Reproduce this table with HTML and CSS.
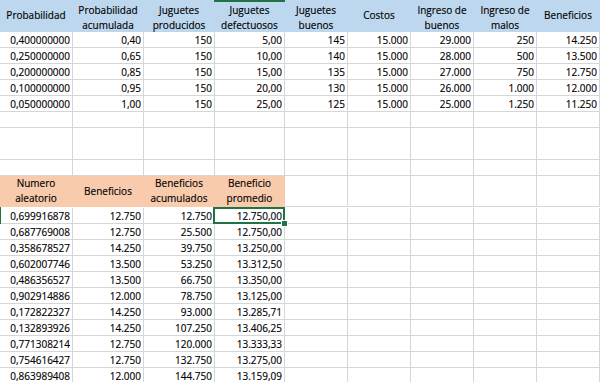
FILE: index.html
```html
<!DOCTYPE html>
<html lang="es">
<head>
<meta charset="utf-8">
<title>Simulación</title>
<link rel="stylesheet" href="styles.css">
</head>
<body>
<div class="sheet">
  <!-- header row -->
  <div class="c hb one">Probabilidad</div>
  <div class="c hb two">Probabilidad<br>acumulada</div>
  <div class="c hb two">Juguetes<br>producidos</div>
  <div class="c hb two colsel">Juguetes<br>defectuosos</div>
  <div class="c hb two">Juguetes<br>buenos</div>
  <div class="c hb one">Costos</div>
  <div class="c hb two">Ingreso de<br>buenos</div>
  <div class="c hb two">Ingreso de<br>malos</div>
  <div class="c hb one">Beneficios</div>

  <div class="c n">0,400000000</div><div class="c n">0,40</div><div class="c n">150</div><div class="c n">5,00</div><div class="c n">145</div><div class="c n">15.000</div><div class="c n">29.000</div><div class="c n">250</div><div class="c n">14.250</div>
  <div class="c n">0,250000000</div><div class="c n">0,65</div><div class="c n">150</div><div class="c n">10,00</div><div class="c n">140</div><div class="c n">15.000</div><div class="c n">28.000</div><div class="c n">500</div><div class="c n">13.500</div>
  <div class="c n">0,200000000</div><div class="c n">0,85</div><div class="c n">150</div><div class="c n">15,00</div><div class="c n">135</div><div class="c n">15.000</div><div class="c n">27.000</div><div class="c n">750</div><div class="c n">12.750</div>
  <div class="c n">0,100000000</div><div class="c n">0,95</div><div class="c n">150</div><div class="c n">20,00</div><div class="c n">130</div><div class="c n">15.000</div><div class="c n">26.000</div><div class="c n">1.000</div><div class="c n">12.000</div>
  <div class="c n">0,050000000</div><div class="c n">1,00</div><div class="c n">150</div><div class="c n">25,00</div><div class="c n">125</div><div class="c n">15.000</div><div class="c n">25.000</div><div class="c n">1.250</div><div class="c n">11.250</div>

  <div class="c"></div><div class="c"></div><div class="c"></div><div class="c"></div><div class="c"></div><div class="c"></div><div class="c"></div><div class="c"></div><div class="c"></div>
  <div class="c tall"></div><div class="c tall"></div><div class="c tall"></div><div class="c tall"></div><div class="c tall"></div><div class="c tall"></div><div class="c tall"></div><div class="c tall"></div><div class="c tall"></div>
  <div class="c"></div><div class="c"></div><div class="c"></div><div class="c"></div><div class="c"></div><div class="c"></div><div class="c"></div><div class="c"></div><div class="c"></div>

  <!-- second table header -->
  <div class="c ho two2">Numero<br>aleatorio</div>
  <div class="c ho one2">Beneficios</div>
  <div class="c ho two2">Beneficios<br>acumulados</div>
  <div class="c ho two2">Beneficio<br>promedio</div>
  <div class="c h2"></div><div class="c h2"></div><div class="c h2"></div><div class="c h2"></div><div class="c h2"></div>

  <div class="c n rowsel">0,699916878</div><div class="c n">12.750</div><div class="c n">12.750</div><div class="c n sel">12.750,00</div><div class="c"></div><div class="c"></div><div class="c"></div><div class="c"></div><div class="c"></div>
  <div class="c n">0,687769008</div><div class="c n">12.750</div><div class="c n">25.500</div><div class="c n">12.750,00</div><div class="c"></div><div class="c"></div><div class="c"></div><div class="c"></div><div class="c"></div>
  <div class="c n">0,358678527</div><div class="c n">14.250</div><div class="c n">39.750</div><div class="c n">13.250,00</div><div class="c"></div><div class="c"></div><div class="c"></div><div class="c"></div><div class="c"></div>
  <div class="c n">0,602007746</div><div class="c n">13.500</div><div class="c n">53.250</div><div class="c n">13.312,50</div><div class="c"></div><div class="c"></div><div class="c"></div><div class="c"></div><div class="c"></div>
  <div class="c n">0,486356527</div><div class="c n">13.500</div><div class="c n">66.750</div><div class="c n">13.350,00</div><div class="c"></div><div class="c"></div><div class="c"></div><div class="c"></div><div class="c"></div>
  <div class="c n">0,902914886</div><div class="c n">12.000</div><div class="c n">78.750</div><div class="c n">13.125,00</div><div class="c"></div><div class="c"></div><div class="c"></div><div class="c"></div><div class="c"></div>
  <div class="c n">0,172822327</div><div class="c n">14.250</div><div class="c n">93.000</div><div class="c n">13.285,71</div><div class="c"></div><div class="c"></div><div class="c"></div><div class="c"></div><div class="c"></div>
  <div class="c n">0,132893926</div><div class="c n">14.250</div><div class="c n">107.250</div><div class="c n">13.406,25</div><div class="c"></div><div class="c"></div><div class="c"></div><div class="c"></div><div class="c"></div>
  <div class="c n">0,771308214</div><div class="c n">12.750</div><div class="c n">120.000</div><div class="c n">13.333,33</div><div class="c"></div><div class="c"></div><div class="c"></div><div class="c"></div><div class="c"></div>
  <div class="c n">0,754616427</div><div class="c n">12.750</div><div class="c n">132.750</div><div class="c n">13.275,00</div><div class="c"></div><div class="c"></div><div class="c"></div><div class="c"></div><div class="c"></div>
  <div class="c n">0,863989408</div><div class="c n">12.000</div><div class="c n">144.750</div><div class="c n">13.159,09</div><div class="c"></div><div class="c"></div><div class="c"></div><div class="c"></div><div class="c"></div>
</div>
</body>
</html>
```

FILE: styles.css
```css
html, body {
  margin: 0;
  padding: 0;
  background: #ffffff;
  overflow: hidden;
}

.sheet {
  display: grid;
  grid-template-columns: 73px 71px 71px 70px 63px 63px 63px 63px 63px;
  grid-auto-rows: 16px;
  width: 600px;
  font-family: "Open Sans", "Liberation Sans", sans-serif;
  font-size: 10px;
  color: #000000;
  -webkit-text-stroke: 0.15px #000000;
}

.c {
  position: relative;
  box-sizing: border-box;
  border-right: 1px solid #d6d6d6;
  border-bottom: 1px solid #d6d6d6;
  line-height: 15px;
  padding-top: 1px;
  white-space: nowrap;
  overflow: visible;
}

.n {
  text-align: right;
  padding-right: 2px;
}

.hb {
  background: #bdd7ee;
  grid-row: span 2;
  text-align: center;
  border-color: transparent;
  line-height: 15px;
}

.hb.two {
  padding-top: 3px;
}

.hb.one {
  padding-top: 8px;
}

.tall {
  grid-row: span 2;
}

.ho {
  background: #f8cbad;
  grid-row: span 2;
  margin-bottom: 1px;
  text-align: center;
  border-color: transparent;
  line-height: 15px;
}

.ho.two2 {
  padding-top: 0;
}

.ho.one2 {
  padding-top: 8px;
}

.h2 {
  grid-row: span 2;
  margin-bottom: 1px;
}

.colsel::before {
  content: "";
  position: absolute;
  left: -1px;
  right: -1px;
  top: 0;
  height: 2px;
  background: #217346;
}

.rowsel::before {
  content: "";
  position: absolute;
  left: 0;
  top: -1px;
  bottom: -1px;
  width: 1px;
  background: #217346;
}

.sel::after {
  content: "";
  position: absolute;
  left: -2px;
  right: -1px;
  top: -1px;
  bottom: -1px;
  border: 2px solid #217346;
  z-index: 2;
}

.sel::before {
  content: "";
  position: absolute;
  right: -3px;
  bottom: -3px;
  width: 5px;
  height: 5px;
  background: #217346;
  outline: 1px solid #ffffff;
  z-index: 3;
}
```
